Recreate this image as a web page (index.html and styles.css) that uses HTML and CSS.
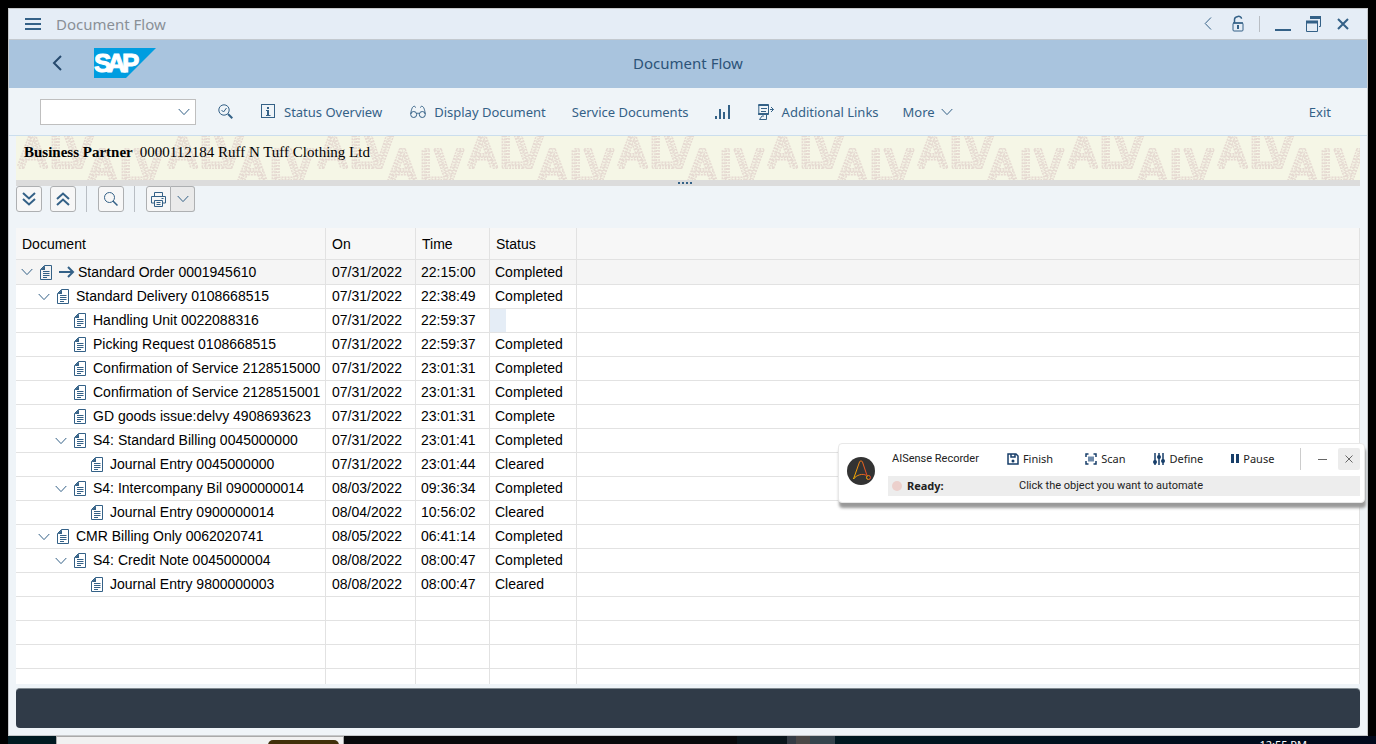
FILE: index.html
```html
<!DOCTYPE html>
<html lang="en">
<head>
<meta charset="utf-8">
<title>Document Flow</title>
<link rel="stylesheet" href="styles.css">
</head>
<body>
<svg class="defs" aria-hidden="true">
  <symbol id="i-chev" viewBox="0 0 12 12"><path d="M.7 3 6 8.600 11.300 3" /></symbol>
  <symbol id="i-doc" viewBox="0 0 12 15"><path d="M4.500.5h7v14H.5v-10z"/><path class="solid" d="M5 .5v4.500H.5z"/><path d="M3 6.500h6.500M3 8.500h6.500M3 10.500h6.500M3 12.500h4" /></symbol>
</svg>
<div class="window">
  <header class="titlebar">
    <button class="ib menu" aria-label="Menu"><svg width="16" height="12" viewBox="0 0 16 12"><path class="w2" d="M0 1h16M0 6h16M0 11h16"/></svg></button>
    <span class="apptitle">Document Flow</span>
    <div class="winctl">
      <button class="ib" aria-label="Previous"><svg width="8" height="13" viewBox="0 0 8 13"><path d="M7 .5 1.200 6.500 7 12.500"/></svg></button>
      <button class="ib lock" aria-label="Unlock"><svg width="12" height="17" viewBox="0 0 12 17"><rect x="1" y="8" width="10" height="8" rx="1"/><path class="w15" d="M1 8h10M2.500 8V4.500C2.500 1 9.500 0 9.500 3.800"/><path class="w2" d="M6 10v4"/></svg></button>
      <span class="vline"></span>
      <button class="ib" aria-label="Minimize"><svg width="16" height="16" viewBox="0 0 16 16"><path class="w2" d="M0 14h16"/></svg></button>
      <button class="ib" aria-label="Restore"><svg width="16" height="16" viewBox="0 0 16 16"><path d="M.5 6v9.500h11V6M14.500 2v8.500H13"/><path class="w3" d="M0 6h12M4 1.500h11"/></svg></button>
      <button class="ib" aria-label="Close"><svg width="12" height="12" viewBox="0 0 12 12"><path class="w2" d="m1 1 10 10M11 1 1 11"/></svg></button>
    </div>
  </header>
  <div class="shell">
    <button class="ib back" aria-label="Back"><svg width="10" height="16" viewBox="0 0 10 16"><path class="w2" d="M9 1 2 8l7 7"/></svg></button>
    <svg class="logo" width="62" height="30" viewBox="0 0 62 30" role="img" aria-label="SAP"><path d="M0 0h62L32 30H0z"/><text x="0 13 28" y="24">SAP</text></svg>
    <h1>Document Flow</h1>
  </div>
  <nav class="toolbar">
    <label class="combo"><input type="text" aria-label="Command"><svg width="12" height="12"><use href="#i-chev"/></svg></label>
    <button class="ib find" aria-label="Find"><svg width="15" height="15" viewBox="0 0 15 15"><circle cx="6" cy="6" r="5.200"/><path d="m3.500 6 2 2 3-4"/><path class="w2" d="m10 10 4.300 4.300"/></svg></button>
    <button class="tb t1"><svg width="15" height="15" viewBox="0 0 15 15"><rect x=".5" y=".5" width="13" height="13"/><path class="w2" d="M7 3v2M7 6v5"/><path d="M5 6.500h2M5 11.500h4.500"/></svg>Status Overview</button>
    <button class="tb t2"><svg width="16" height="14" viewBox="0 0 16 14"><circle cx="3.700" cy="9.500" r="3"/><circle cx="12.300" cy="9.500" r="3"/><path d="M.8 9C1 6 2 2 3.500 1.500c1-.5 2 0 2 1M15.200 9C15 6 14 2 12.500 1.500c-1-.5-2 0-2 1M6.500 8.800c1-.8 2-.8 3 0"/></svg>Display Document</button>
    <button class="tb t3">Service Documents</button>
    <button class="ib t4" aria-label="Chart"><svg width="15" height="14" viewBox="0 0 15 14"><path class="w2" d="M1 14v-3M5 14V4M9 14V7M14 14V0"/></svg></button>
    <button class="tb t5"><svg width="16" height="16" viewBox="0 0 16 16"><path d="M.8 1v10M10.500 1v9M3 7.500h5M3 4.500h6M12 5.500h3.500M13 3l2.500 2.500L13 8M8.500 10v5.500h-7L4 12h2"/><path class="w2" d="M.3 1h10.500M.3 10h10.500"/></svg>Additional Links</button>
    <button class="tb t6">More<svg width="12" height="12"><use href="#i-chev"/></svg></button>
    <button class="tb exit">Exit</button>
  </nav>
  <main>
    <section class="banner">
      <svg class="pattern" width="100%" height="100%" aria-hidden="true">
        <defs><pattern id="alv" width="150" height="44" patternUnits="userSpaceOnUse">
          <g class="o"><text x="2" y="31">A</text><text x="34" y="31">L</text><text x="49" y="31">V</text><text x="72" y="46">A</text><text x="104" y="46">L</text><text x="119" y="46">V</text></g>
          <g class="n"><text x="2" y="31">A</text><text x="34" y="31">L</text><text x="49" y="31">V</text><text x="72" y="46">A</text><text x="104" y="46">L</text><text x="119" y="46">V</text></g>
        </pattern></defs>
        <rect width="100%" height="100%" fill="url(#alv)" stroke="none"/>
      </svg>
      <p><b>Business Partner</b><span>0000112184 Ruff N Tuff Clothing Ltd</span></p>
    </section>
    <div class="splitter"><i></i><i></i><i></i><i></i></div>
    <div class="treebar">
      <button class="sq" aria-label="Expand all"><svg width="14" height="14" viewBox="0 0 14 14"><path class="w2" d="m1 1 6 5.500L13 1M1 7l6 5.500L13 7"/></svg></button>
      <button class="sq" aria-label="Collapse all"><svg width="14" height="14" viewBox="0 0 14 14"><path class="w2" d="m1 7 6-5.500L13 7M1 13l6-5.500 6 5.500"/></svg></button>
      <span class="vline"></span>
      <button class="sq" aria-label="Search"><svg width="14" height="14" viewBox="0 0 14 14"><circle cx="5.500" cy="5.500" r="5"/><path class="w15" d="m9 9 4.500 4.500"/></svg></button>
      <span class="vline"></span>
      <div class="split"><button class="sq" aria-label="Print"><svg width="15" height="15" viewBox="0 0 15 15"><path d="M3.500 4.500v-4h8v4M3.500 11H.5V4.500h14V11h-3M3.500 8.500h8v6h-8zM5.500 10.500h4M5.500 12.500h4M10.500 6.500h2"/></svg></button><button class="sq more" aria-label="Print options"><svg width="12" height="12"><use href="#i-chev"/></svg></button></div>
    </div>
    <div class="grid">
      <table>
        <colgroup><col class="c1"><col class="c2"><col class="c3"><col class="c4"><col></colgroup>
        <thead><tr><th>Document</th><th>On</th><th>Time</th><th>Status</th><th></th></tr></thead>
        <tbody id="rows"></tbody>
      </table>
    </div>
    <footer class="status"></footer>
  </main>
</div>
<div class="taskbar"><span class="k1"></span><span class="k2"><i></i></span><span class="k3"></span><span class="k4"></span><span class="k5"></span><span class="k6"></span><span class="k7"></span><span class="k8"><time>12:55 PM</time></span></div>

<aside class="recorder">
  <svg class="rlogo" width="28" height="28" viewBox="0 0 28 28"><defs><linearGradient id="g"><stop offset="0" stop-color="#f5b400"/><stop offset="1" stop-color="#e8442a"/></linearGradient></defs><circle cx="14" cy="14" r="14" fill="#333"/><path d="M6.500 22 12.500 5c.7-1.500 2.300-1.500 3 0l4.500 13.500M6.500 22c3-4 9-6 13-3.500"/><circle cx="21.500" cy="20.500" r="2"/></svg>
  <div class="rbody">
    <div class="rtop">
      <span class="rname">AISense Recorder</span>
      <button class="rb r1"><svg width="12" height="12" viewBox="0 0 12 12"><path class="w15" d="M1 1h8l2 2v8H1z"/><path class="w15" d="M4 1v3h4V1"/><circle class="solid" cx="6" cy="8" r="1.500"/></svg>Finish</button>
      <button class="rb r2"><svg width="12" height="12" viewBox="0 0 12 12"><path class="w15" d="M1 4V1h2.500M8.500 1H11v3M11 8v3H8.500M3.500 11H1V8"/><rect class="pale" x="3" y="3.500" width="6" height="5"/></svg>Scan</button>
      <button class="rb r3"><svg width="12" height="12" viewBox="0 0 12 12"><path class="w15" d="M2 0v12M6 0v12M10 0v12"/><circle class="solid" cx="2" cy="9" r="2"/><circle class="solid" cx="6" cy="4" r="2"/><circle class="solid" cx="10" cy="8" r="2"/></svg>Define</button>
      <button class="rb r4"><svg width="8" height="10" viewBox="0 0 8 10"><path class="w3" d="M1.500 0v9M6.500 0v9"/></svg>Pause</button>
      <span class="vline"></span>
      <button class="rx" aria-label="Minimize recorder"><svg width="9" height="9"><path d="M0 4.500h9"/></svg></button>
      <button class="rx on" aria-label="Close recorder"><svg width="8" height="8"><path d="m.5.5 7 7M7.500.5l-7 7"/></svg></button>
    </div>
    <div class="rready"><i></i><b>Ready:</b><span>Click the object you want to automate</span></div>
  </div>
</aside>
<script src="rows.js"></script>
</body>
</html>
```
FILE: rows.js
```js
const rows = [
  [0, 1, "Standard Order 0001945610", "07/31/2022", "22:15:00", "Completed"],
  [1, 1, "Standard Delivery 0108668515", "07/31/2022", "22:38:49", "Completed"],
  [2, 0, "Handling Unit 0022088316", "07/31/2022", "22:59:37", ""],
  [2, 0, "Picking Request 0108668515", "07/31/2022", "22:59:37", "Completed"],
  [2, 0, "Confirmation of Service 2128515000", "07/31/2022", "23:01:31", "Completed"],
  [2, 0, "Confirmation of Service 2128515001", "07/31/2022", "23:01:31", "Completed"],
  [2, 0, "GD goods issue:delvy 4908693623", "07/31/2022", "23:01:31", "Complete"],
  [2, 1, "S4: Standard Billing 0045000000", "07/31/2022", "23:01:41", "Completed"],
  [3, 0, "Journal Entry 0045000000", "07/31/2022", "23:01:44", "Cleared"],
  [2, 1, "S4: Intercompany Bil 0900000014", "08/03/2022", "09:36:34", "Completed"],
  [3, 0, "Journal Entry 0900000014", "08/04/2022", "10:56:02", "Cleared"],
  [1, 1, "CMR Billing Only 0062020741", "08/05/2022", "06:41:14", "Completed"],
  [2, 1, "S4: Credit Note 0045000004", "08/08/2022", "08:00:47", "Completed"],
  [3, 0, "Journal Entry 9800000003", "08/08/2022", "08:00:47", "Cleared"]
];
const arrow = '<svg class="arrow" width="15" height="12" viewBox="0 0 15 12"><path class="w2" d="M0 6h14M9 1l5 5-5 5"/></svg>';
const chev = '<button class="tw" aria-label="Collapse"><svg width="12" height="12"><use href="#i-chev"/></svg></button>';
let html = rows.map(([level, open, name, on, time, status], i) =>
  `<tr class="${i ? "" : "root"}"><td><div class="node l${level}">${open ? chev : '<span class="tw"></span>'}` +
  `<svg class="doc" width="12" height="15"><use href="#i-doc"/></svg>${i ? "" : arrow}<span>${name}</span></div></td>` +
  `<td>${on}</td><td>${time}</td><td>${status || '<span class="cell"></span>'}</td><td></td></tr>`).join("");
html += "<tr><td></td><td></td><td></td><td></td><td></td></tr>".repeat(4);
document.getElementById("rows").innerHTML = html;
```
FILE: styles.css
```css
* { box-sizing: border-box; }
body { margin: 0; height: 100vh; background: #000; display: flex; flex-direction: column; overflow: hidden; font: 14px/20px "Liberation Sans", sans-serif; color: #000; position: relative; }
button { font: inherit; color: inherit; background: none; border: 0; padding: 0; margin: 0; display: flex; align-items: center; }
svg { display: block; flex: none; fill: none; stroke: #346187; overflow: visible; }
.defs { position: absolute; width: 0; height: 0; }
.w15 { stroke-width: 1.5; }
.w2 { stroke-width: 2; }
.w3 { stroke-width: 3; }
.solid { fill: #346187; stroke: none; }
.window { flex: 1; min-height: 0; margin: 8px 8px 0; border: 1px solid #c6c8ca; background: #eff4f8; display: flex; flex-direction: column; }
.titlebar { height: 31px; flex: none; background: #e5edf6; border-bottom: 1px solid #c3c9cf; display: flex; align-items: center; padding: 0 18px 1px 16px; gap: 15px; }
.apptitle { font: 15px/20px "Noto Sans", sans-serif; color: #8a9096; }
.winctl { margin-left: auto; display: flex; align-items: center; gap: 15px; }
.lock { margin-left: 5px; }
.vline { width: 1px; height: 16px; background: #b9bec4; }
.shell { height: 48px; flex: none; background: #a9c4de; display: grid; grid-template-columns: 1fr auto 1fr; align-items: center; padding-bottom: 2px; }
.back { grid-column: 1; grid-row: 1; margin-left: 43px; justify-self: start; }
.back path { stroke: #264a6e; }
.logo { grid-column: 1; grid-row: 1; margin-left: 85px; justify-self: start; }
.logo path { fill: #009de0; stroke: none; }
.logo text { font: bold 26px "Liberation Sans", sans-serif; fill: #fff; stroke: #fff; stroke-width: 1; }
h1 { grid-column: 2; margin: 0; font: 15px/20px "Noto Sans", sans-serif; color: #2c5378; }
.toolbar { height: 48px; flex: none; border-bottom: 1px solid #cbdeed; display: flex; align-items: center; padding: 0 36px 0 31px; color: #346187; font: 13px/20px "Noto Sans", sans-serif; }
.combo { width: 156px; height: 26px; border: 1px solid #bfbfbf; background: #fff; display: flex; align-items: center; padding-right: 5px; margin-right: 22px; }
.combo input { flex: 1; min-width: 0; border: 0; outline: 0; background: none; font: inherit; }
.tb { gap: 8px; white-space: nowrap; }
.t1, .t2 { margin-left: 28px; }
.t3, .t4 { margin-left: 26px; }
.t5 { margin-left: 28px; }
.t6 { margin-left: 24px; gap: 6px; }
.exit { margin-left: auto; }
main { flex: 1; min-height: 0; padding: 0 7px 7px; display: flex; flex-direction: column; }
.banner { height: 44px; flex: none; background: #f5f6e6; position: relative; overflow: hidden; }
.pattern { position: absolute; inset: 0; }
.pattern text { font: 44px Roboto, sans-serif; }
.pattern .o { fill: #f5f6e6; stroke: #e6dad2; stroke-width: 4; stroke-dasharray: 2 1; stroke-linejoin: round; }
.pattern .n { fill: none; stroke: #f5f6e6; stroke-width: 1; stroke-dasharray: 2 2; }
.banner p { position: relative; margin: 0; padding: 6px 8px; display: flex; gap: 7px; font: 15px/20px "Liberation Serif", serif; }
.splitter { height: 6px; flex: none; background: #dcdcdc; display: flex; justify-content: center; align-items: center; gap: 2px; padding-right: 6px; }
.splitter i { width: 2px; height: 2px; background: #346187; }
.treebar { height: 42px; flex: none; display: flex; align-items: flex-start; gap: 8px; }
.treebar .vline { height: 26px; margin: 0 3px 0 2px; }
.sq { width: 26px; height: 26px; border: 1px solid #aeb0b2; border-radius: 3px; background: #f7f7f7; justify-content: center; }
.split { display: flex; }
.split .sq { border-radius: 3px 0 0 3px; width: 25px; }
.split .more { border-left: 0; border-radius: 0 3px 3px 0; background: #eaeaea; width: 24px; }
.grid { flex: 1; min-height: 0; overflow: hidden; background: #fff; }
table { width: 100%; table-layout: fixed; border-collapse: separate; border-spacing: 0; }
.c1 { width: 310px; } .c2 { width: 90px; } .c3 { width: 74px; } .c4 { width: 87px; }
th, td { border: 0 solid #e2e2e2; border-width: 0 1px 1px 0; text-align: left; font-weight: 400; height: 24px; padding: 0 0 0 6px; line-height: 23px; white-space: nowrap; }
th { height: 32px; background: #f7f7f7; padding-top: 1px; }
td:first-child { padding: 0; }
td:nth-child(3), td:nth-child(4) { padding-left: 5px; }
.root td { height: 25px; background: #f5f5f5; }
.node { display: flex; align-items: center; gap: 7px; height: 23px; padding-left: 5px; }
.l1 { padding-left: 22px; } .l2 { padding-left: 39px; } .l3 { padding-left: 56px; }
.tw { width: 12px; height: 12px; flex: none; }
.doc { height: 15px; }
.arrow { margin-right: -3px; }
.cell { display: block; width: 16px; height: 23px; margin-left: -5px; background: #e5edf6; }
.status { height: 40px; flex: none; margin-top: 4px; background: #303b48; border-top: 1px solid #80898f; border-radius: 4px; }
.taskbar { height: 8px; flex: none; margin: 0 0 0 8px; display: flex; overflow: hidden; background: #08090b; }
.k1 { width: 48px; background: #001a21; }
.k2 { width: 288px; background: #f1f1f1; border: 1px solid #aaa; border-bottom: 0; display: flex; justify-content: flex-end; padding: 3px 4px 0 0; }
.k2 i { width: 71px; height: 12px; background: #41300a; border-radius: 5px; }
.k3 { width: 393px; } .k4 { width: 50px; background: #09151b; } .k5 { width: 9px; background: #343c45; } .k6 { width: 14px; background: #4b4847; } .k7 { width: 25px; background: #35444d; }
.k8 { flex: 1; background: linear-gradient(90deg, #001820, #00081b); display: flex; justify-content: flex-end; padding: 2px 69px 0 0; }
.k8 time { font: 11px/14px "Noto Sans", sans-serif; color: #fff; height: 14px; }
.recorder { position: absolute; top: 443px; right: 11px; width: 527px; background: #fff; border: 1px solid #e8e8e8; border-radius: 4px; box-shadow: 1px 5px 3px #999; padding: 1px 4px 6px 8px; display: flex; align-items: center; gap: 13px; font: 11px/18px "Noto Sans", sans-serif; color: #222; }
.rlogo path, .rlogo circle:last-child { stroke: url(#g); }
.rlogo circle:first-of-type { stroke: none; }
.rbody { flex: 1; }
.rtop { height: 31px; display: flex; align-items: center; padding: 0 0 3px 4px; }
.rname, .rready span { font-family: Roboto, sans-serif; }
.rb { gap: 4px; }
.rb svg { stroke: #173e69; }
.rb .solid { fill: #173e69; }
.rb .pale { fill: #6d89aa; stroke: none; }
.r1 { margin-left: 28px; }
.r2 { margin-left: 32px; }
.r3 { margin-left: 28px; }
.r4 { margin-left: 28px; }
.rtop .vline { height: 22px; margin-left: auto; margin-right: 10px; background: #ccc; }
.rx { width: 22px; height: 22px; justify-content: center; margin-right: 5px; border-radius: 2px; }
.rx svg { stroke: #666; }
.rx.on { background: #ececec; margin-right: 0; }
.rready { height: 20px; background: #ededed; display: flex; align-items: center; padding-left: 4px; }
.rready i { width: 10px; height: 10px; border-radius: 50%; background: #ecd0cc; margin-right: 5px; }
.rready b { width: 112px; }
```
